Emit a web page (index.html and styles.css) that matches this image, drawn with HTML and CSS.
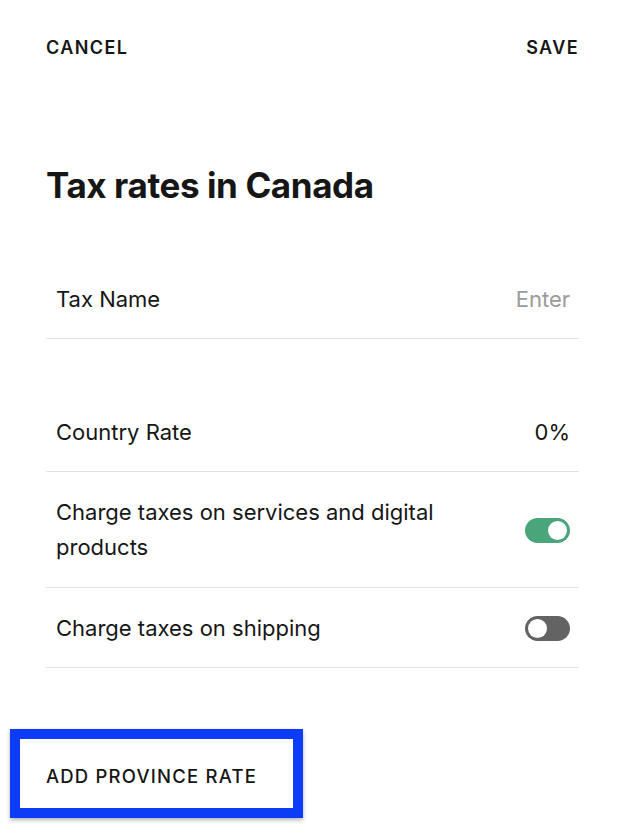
FILE: index.html
```html
<!DOCTYPE html>
<html lang="en">
<head>
<meta charset="utf-8">
<title>Tax rates in Canada</title>
<link rel="stylesheet" href="styles.css">
</head>
<body>
<div class="page">
  <header class="topbar">
    <span class="action">CANCEL</span>
    <span class="action">SAVE</span>
  </header>
  <h1 class="title">Tax rates in Canada</h1>
  <div class="group first">
    <div class="row">
      <span class="label">Tax Name</span>
      <span class="placeholder">Enter</span>
    </div>
  </div>
  <div class="group">
    <div class="row">
      <span class="label">Country Rate</span>
      <span class="value">0%</span>
    </div>
    <div class="row">
      <span class="label wrap">Charge taxes on services and digital products</span>
      <span class="toggle on"><span class="knob"></span></span>
    </div>
    <div class="row">
      <span class="label">Charge taxes on shipping</span>
      <span class="toggle off"><span class="knob"></span></span>
    </div>
  </div>
  <div class="add-wrap">
    <span class="add-btn">ADD PROVINCE RATE</span>
  </div>
</div>
</body>
</html>
```
FILE: styles.css
```css
* { box-sizing: border-box; }
html, body { margin: 0; padding: 0; background: #fff; }
body {
  font-family: "Inter", "Liberation Sans", sans-serif;
  color: #161616;
}
.page {
  width: 620px;
  height: 838px;
  padding: 0 41px 0 46px;
  overflow: hidden;
}
.topbar {
  display: flex;
  justify-content: space-between;
  padding-top: 38px;
  line-height: 20px;
}
.action {
  font-size: 18px;
  font-weight: 600;
  letter-spacing: 1.4px;
}
.title {
  margin: 107px 0 0;
  font-size: 35px;
  line-height: 40px;
  font-weight: 700;
  letter-spacing: -0.4px;
}
.group.first { margin-top: 54px; }
.group { margin-top: 53px; }
.row {
  display: flex;
  align-items: center;
  justify-content: space-between;
  padding: 23px 9px 21px 10px;
  border-bottom: 1px solid #e2e2e2;
  font-size: 22px;
  line-height: 35px;
}
.row + .row { padding-bottom: 21.5px; }
.label.wrap { max-width: 420px; }
.placeholder { color: #9a9a9a; }
.toggle {
  flex: none;
  width: 45px;
  height: 25px;
  border-radius: 13px;
  padding: 3px;
  display: flex;
}
.toggle.on { background: #4aa57b; justify-content: flex-end; }
.toggle.off { background: #636363; justify-content: flex-start; }
.knob {
  width: 19px;
  height: 19px;
  border-radius: 50%;
  background: #fff;
}
.add-wrap {
  margin-top: 61px;
  margin-left: -36px;
}
.add-btn {
  display: inline-block;
  border: 10px solid #0d3cf7;
  box-shadow: 0 2px 4px rgba(0,0,0,0.3);
  padding: 27px 36px 22px 26px;
  font-size: 18.5px;
  line-height: 20px;
  font-weight: 500;
  letter-spacing: 1.2px;
}
```
